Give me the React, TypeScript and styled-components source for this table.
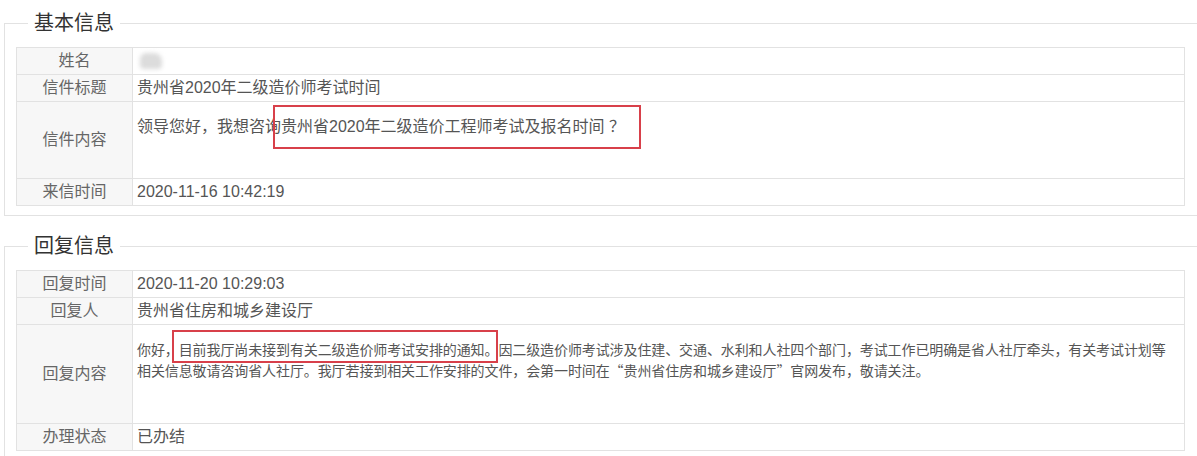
import React from "react";
import styled, { createGlobalStyle } from "styled-components";

const Global = createGlobalStyle`
  html, body { margin: 0; padding: 0; background: #fff; overflow: hidden; }
  body { font-family: "Liberation Sans", "Noto Sans CJK SC", sans-serif; }
`;

const Page = styled.div`
  width: 1197px;
  height: 456px;
  overflow: hidden;
  padding-left: 4px;
  box-sizing: border-box;
`;

const Group = styled.fieldset<{ $top: number }>`
  margin: ${(p) => p.$top}px 0 0 0;
  width: 1220px;
  box-sizing: border-box;
  border: 1px solid #e2e2e2;
  padding: 10px 11px 9px 11px;
  min-inline-size: 0;
`;

const Legend = styled.legend`
  margin-left: 12px;
  padding: 0 6px;
  font-size: 20px;
  line-height: 28px;
  color: #333;
  font-family: "Liberation Sans", "Noto Sans CJK SC", sans-serif;
`;

const Table = styled.table`
  width: 1169px;
  border-collapse: collapse;
  border: 1px solid #e2e2e2;
  table-layout: fixed;
  font-size: 16px;
`;

const Label = styled.td`
  width: 115px;
  padding: 0;
  border: 1px solid #e2e2e2;
  background: #f7f7f7;
  color: #666;
  text-align: center;
  vertical-align: middle;
  line-height: 26px;
  height: 26px;
`;

const Value = styled.td<{ $pt?: number; $pb?: number; $small?: boolean }>`
  padding: ${(p) => p.$pt ?? 0}px ${(p) => (p.$small ? 10 : 2)}px
    ${(p) => p.$pb ?? 0}px 4px;
  border: 1px solid #e2e2e2;
  color: #555;
  vertical-align: top;
  font-size: ${(p) => (p.$small ? 14 : 16)}px;
  line-height: ${(p) => (p.$small ? 21 : 26)}px;
  letter-spacing: ${(p) => (p.$small ? "-0.1px" : "normal")};
  font-family: ${(p) =>
    p.$small
      ? `"Noto Sans CJK SC", "Liberation Sans", sans-serif`
      : `"Liberation Sans", "Noto Sans CJK SC", sans-serif`};
  height: 26px;
`;

const Mask = styled.span`
  display: inline-block;
  width: 22px;
  height: 16px;
  margin: 5px 0 0 3px;
  vertical-align: top;
  background: #dcdcdc;
  border-radius: 6px 8px 4px 4px;
  filter: blur(2px);
`;

const Marked = styled.span<{ $t: number; $r: number; $b: number; $l: number }>`
  position: relative;
  &::after {
    content: "";
    position: absolute;
    top: ${(p) => p.$t}px;
    right: ${(p) => p.$r}px;
    bottom: ${(p) => p.$b}px;
    left: ${(p) => p.$l}px;
    border: 2px solid #d8404a;
    pointer-events: none;
  }
`;

export default function App() {
  return (
    <Page>
      <Global />
      <Group $top={9}>
        <Legend>基本信息</Legend>
        <Table>
          <tbody>
            <tr>
              <Label>姓名</Label>
              <Value>
                <Mask />
              </Value>
            </tr>
            <tr>
              <Label>信件标题</Label>
              <Value>贵州省2020年二级造价师考试时间</Value>
            </tr>
            <tr>
              <Label>信件内容</Label>
              <Value $pt={12} $pb={38}>
                领导您好，我想咨询
                <Marked $t={-13} $r={-16} $b={-14} $l={-8}>
                  贵州省2020年二级造价工程师考试及报名时间 ？
                </Marked>
              </Value>
            </tr>
            <tr>
              <Label>来信时间</Label>
              <Value>2020-11-16 10:42:19</Value>
            </tr>
          </tbody>
        </Table>
      </Group>
      <Group $top={16}>
        <Legend>回复信息</Legend>
        <Table>
          <tbody>
            <tr>
              <Label>回复时间</Label>
              <Value>2020-11-20 10:29:03</Value>
            </tr>
            <tr>
              <Label>回复人</Label>
              <Value>贵州省住房和城乡建设厅</Value>
            </tr>
            <tr>
              <Label>回复内容</Label>
              <Value $small $pt={14} $pb={42}>
                你好，
                <Marked $t={-9} $r={0} $b={-4} $l={-7}>
                  目前我厅尚未接到有关二级造价师考试安排的通知。
                </Marked>
                因二级造价师考试涉及住建、交通、水利和人社四个部门，考试工作已明确是省人社厅牵头，有关考试计划等相关信息敬请咨询省人社厅。我厅若接到相关工作安排的文件，会第一时间在“贵州省住房和城乡建设厅”官网发布，敬请关注。
              </Value>
            </tr>
            <tr>
              <Label>办理状态</Label>
              <Value>已办结</Value>
            </tr>
          </tbody>
        </Table>
      </Group>
    </Page>
  );
}
